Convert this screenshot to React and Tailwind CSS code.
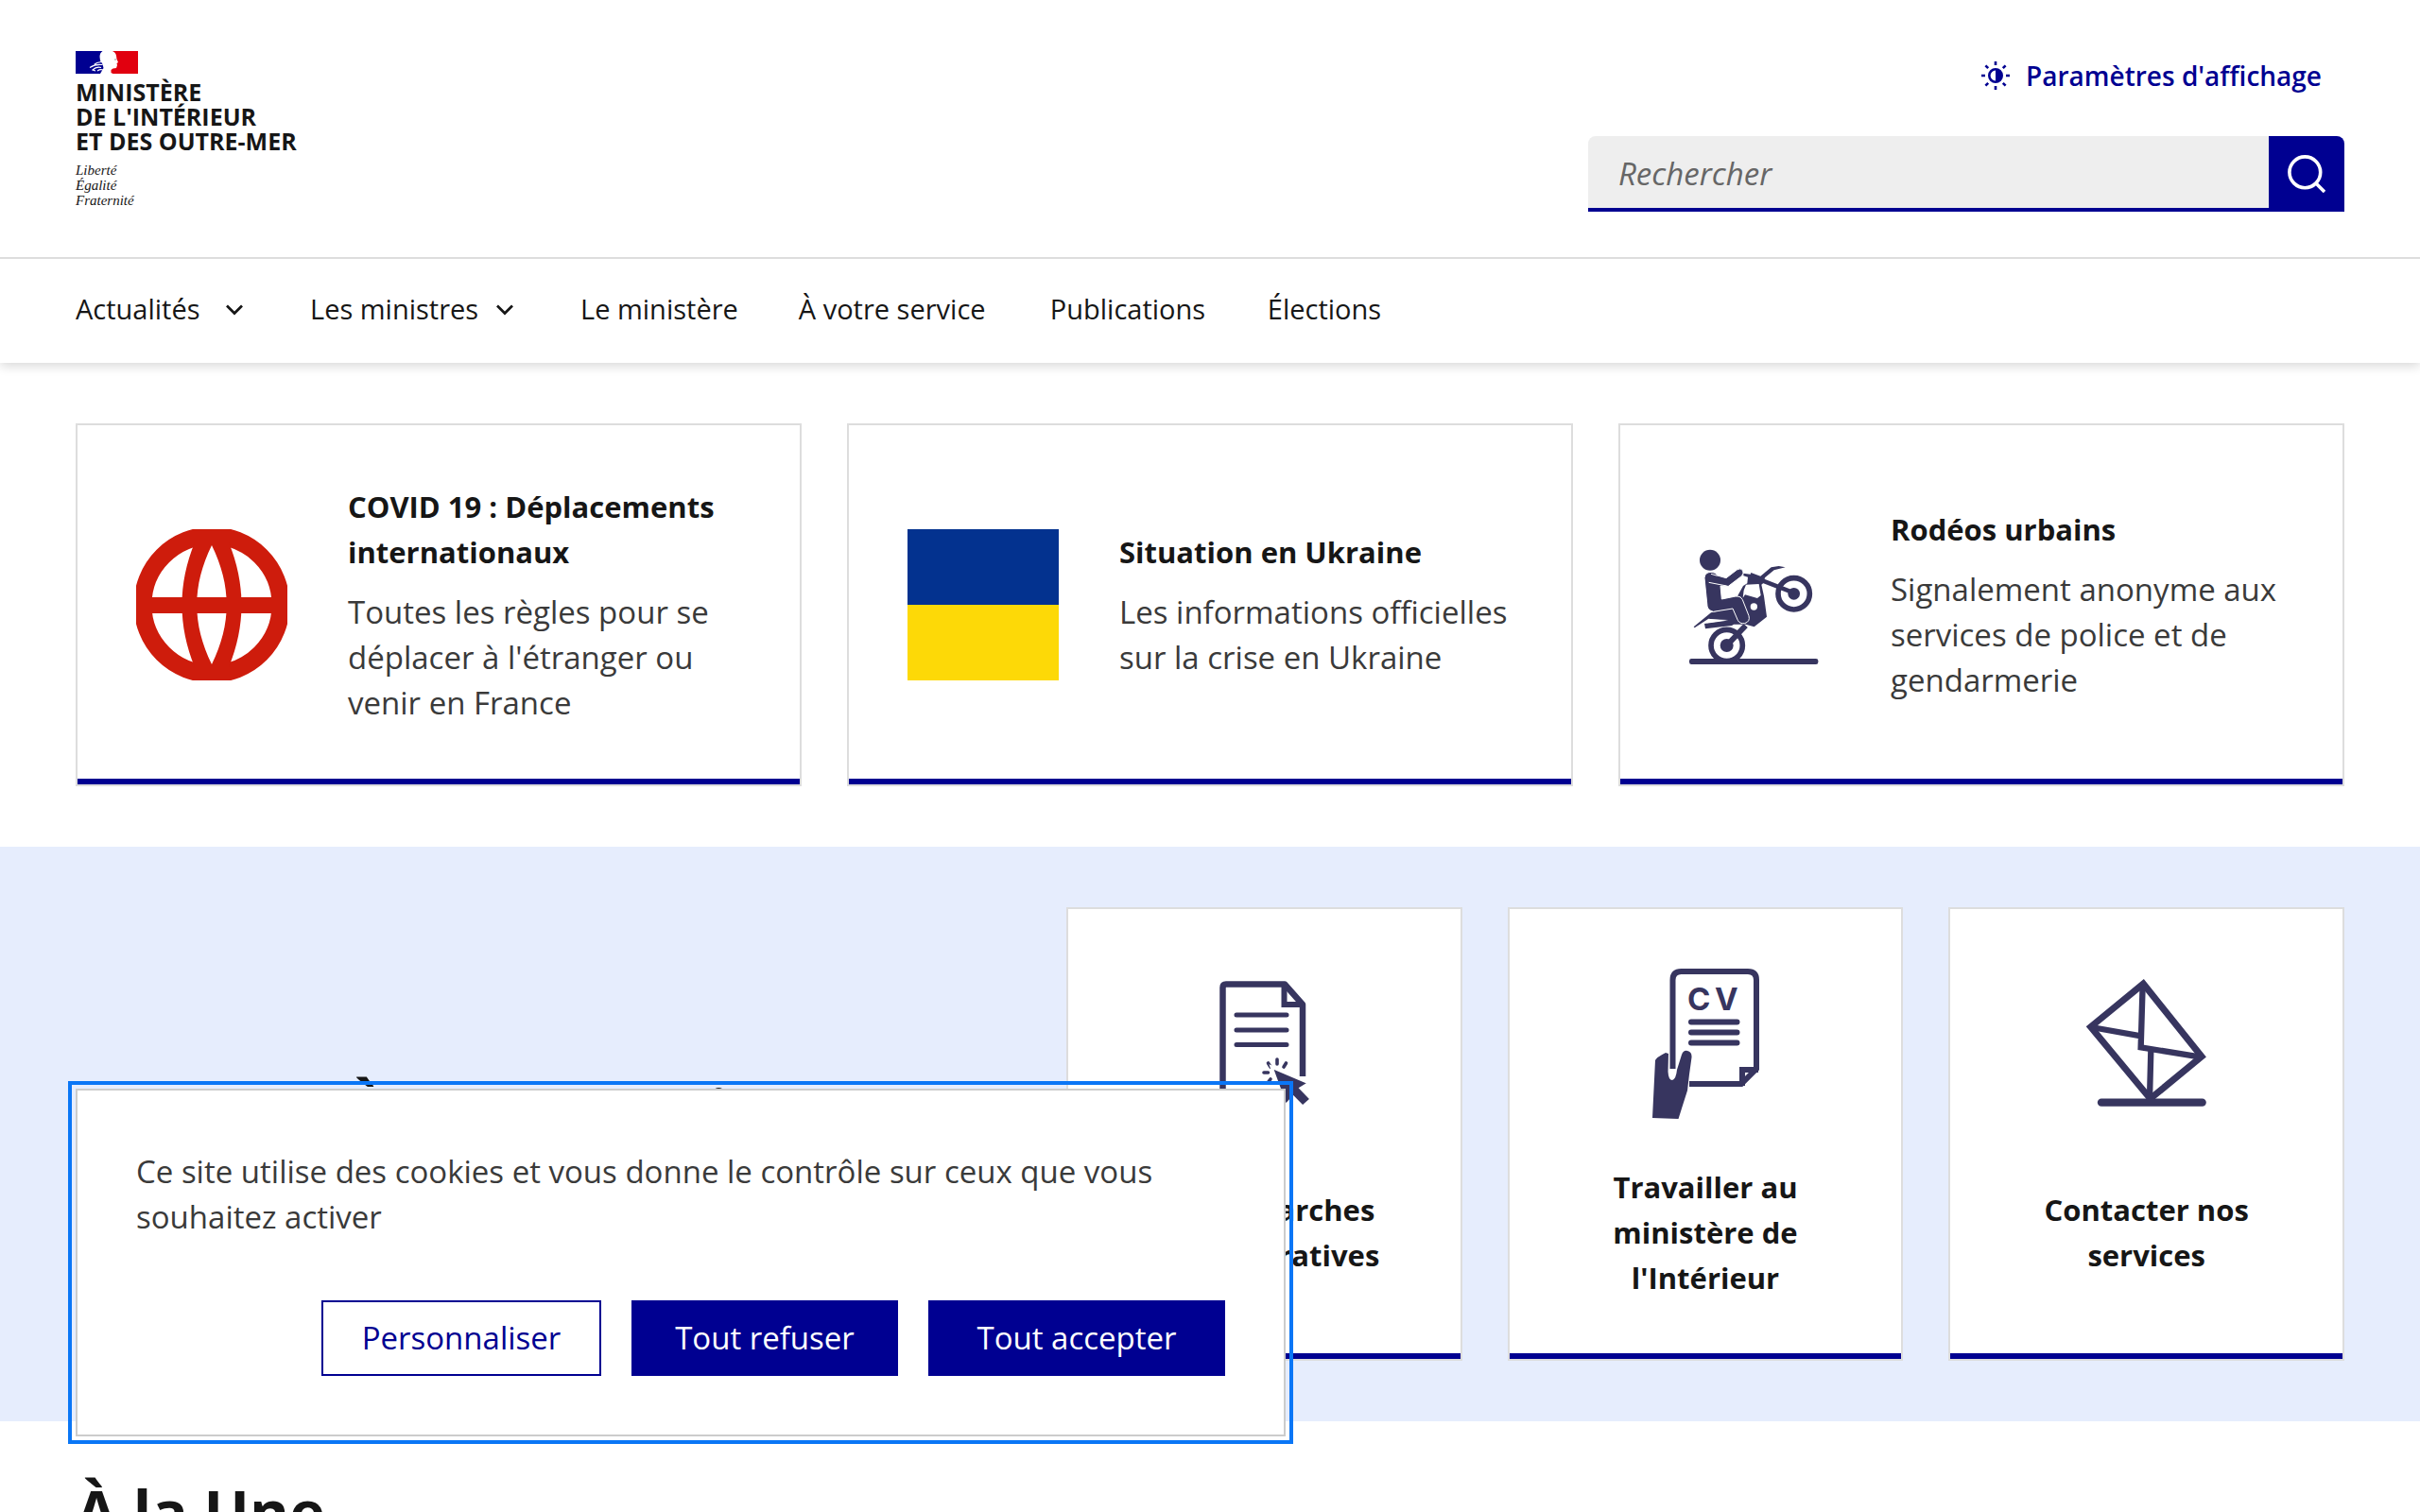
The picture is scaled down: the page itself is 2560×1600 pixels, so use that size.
import React from 'react';

const INK = '#37355f';

function FlagLogo() {
  return (
    <svg viewBox="0 0 66 24" className="h-6 w-[66px]" aria-hidden="true">
      <rect width="66" height="24" fill="#fff" />
      <path fill="#000091" d="M0 0H28.500Q25.500 2 25.500 6L26 10L28.500 14L29.500 18L26 24H0Z" />
      <path fill="#e1000f" d="M66 0H39Q42.500 1.500 43 5L43.500 8.500L45 12L43.500 13L44 15L43 18L39.500 18.500L37.500 20L37.500 23L39.500 24H66Z" />
      <path d="M27 11.500Q22 12 19.500 14.500M28.500 14.500Q21 13.500 15 17.500M27 17.500Q22 16 18 20L21 21M29 20Q26 19 23 21" fill="none" stroke="#fff" strokeWidth="1.200" />
      <path d="M41 9h2" stroke="#999" strokeWidth="1" />
    </svg>
  );
}

function SunIcon() {
  return (
    <svg viewBox="0 0 32 32" className="size-8" fill="none" stroke="currentColor" aria-hidden="true">
      <circle cx="16" cy="16" r="6.700" strokeWidth="2.600" />
      <path d="M16 9.500a6.500 6.500 0 0 1 0 13Z" fill="currentColor" stroke="none" />
      <path strokeWidth="2.600" d="M16 1v4M16 27v4M1 16h4M27 16h4M5.400 5.400l2.800 2.800M23.800 23.800l2.800 2.800M5.400 26.600l2.800-2.800M23.800 8.200l2.800-2.800" />
    </svg>
  );
}

function SearchIcon() {
  return (
    <svg viewBox="0 0 40 40" className="size-10" fill="none" stroke="currentColor" strokeWidth="3.600" aria-hidden="true">
      <circle cx="18.300" cy="18.300" r="16.400" />
      <path d="M30 30l9 9" />
    </svg>
  );
}

function Chevron() {
  return (
    <svg viewBox="0 0 32 32" className="size-8" fill="none" stroke="currentColor" strokeWidth="2.700" aria-hidden="true">
      <path d="M8 12.500l8 8 8-8" />
    </svg>
  );
}

function GlobeIcon() {
  return (
    <svg viewBox="0 0 160 160" className="size-40 shrink-0" fill="#ce1c0c" aria-hidden="true">
      <circle cx="80" cy="80" r="73" fill="none" stroke="#ce1c0c" strokeWidth="19" />
      <path
        fillRule="evenodd"
        d="M62 14C44 58 44 102 62 146H98C116 102 116 58 98 14ZM80 17C59 60 59 100 80 143C101 100 101 60 80 17Z"
      />
      <rect x="8" y="72" width="144" height="17" />
    </svg>
  );
}

function UkraineFlag() {
  return (
    <svg viewBox="0 0 160 160" className="size-40 shrink-0" aria-hidden="true">
      <rect width="160" height="80" fill="#03328f" />
      <rect y="80" width="160" height="80" fill="#fdd907" />
    </svg>
  );
}

function MotoIcon() {
  return (
    <svg viewBox="228 60 480 480" className="size-40 shrink-0" fill={INK} aria-hidden="true">
      <circle cx="327" cy="158" r="33" />
      <rect x="261" y="471" width="409" height="18" rx="7" />
      <g fill="none" stroke={INK} strokeWidth="17">
        <circle cx="593" cy="265" r="50" />
        <circle cx="380" cy="429" r="50" />
      </g>
      <circle cx="593" cy="265" r="19" />
      <circle cx="380" cy="429" r="21" />
      <path d="M380 429L440 366" stroke={INK} strokeWidth="18" />
      <path d="M495 224L593 262" stroke={INK} strokeWidth="14" />
      <path d="M433 200L455 203L457 198L487 209L521 181L545 177L566 181L530 190L501 214L497 230L490 236L498 272L507 338L467 370L440 362L402 362L396 366L312 376L309 360L380 350L322 344L278 373L275 370L330 325L400 310L425 275L414 272L432 240L445 232L447 212L433 208Z" />
      <path fill="#fff" d="M441 236L482 234L488 270L477 279L438 268L431 278L434 254ZM322 346L385 348L318 358Z" />
      <circle cx="466" cy="306" r="11" fill="#fff" />
      <path d="M309 215Q310 197 330 196Q345 196 350 207L378 215L412 189Q424 181 431 191Q435 201 427 209L385 241L360 240L364 282L408 273Q424 272 430 284L450 335Q455 353 437 359Q421 361 415 349L399 312L337 322Q320 317 318 304Z" stroke="#fff" strokeWidth="3" />
      <path d="M323 229L380 240M330 202L350 208" stroke="#fff" strokeWidth="3" />
    </svg>
  );
}

function DocumentIcon() {
  return (
    <svg viewBox="0 0 160 160" className="size-40 shrink-0" fill="none" stroke={INK} aria-hidden="true">
      <path strokeWidth="6.500" strokeLinejoin="round" d="M121 115V39L102 17.500H40Q36.500 17.500 36.500 21V136H92" />
      <path strokeWidth="6" d="M101.500 16V39H121" />
      <path strokeWidth="5" strokeLinecap="round" d="M51 50H104M51 66H104M51 81.500H104" />
      <path strokeWidth="3.600" strokeLinecap="round" d="M94 97V102M84.500 101L87 105M103.500 101L101 105M80 111H84.500M87 118L85 120.500" />
      <path fill={INK} stroke="#fff" strokeWidth="3" d="M88 105L128 122L119 127.500L130 139L121 147L111 137L103 146Z" />
    </svg>
  );
}

function CvIcon() {
  return (
    <svg viewBox="0 0 160 160" className="size-40 shrink-0" fill="none" stroke={INK} aria-hidden="true">
      <path strokeWidth="6" d="M45.500 107V13Q45.500 4 54.500 4H125Q134 4 134 13V107L118 123H63" />
      <path strokeWidth="6" d="M119 125V108H136" />
      <path strokeWidth="6" strokeLinecap="round" d="M65 57.500H113.500M65 68.500H113.500M65 79.500H113.500" />
      <path fill={INK} stroke="none" d="M27 98Q28 95 38 90L41 91L40.500 110Q41 119 45 119Q49 118 50 108L55 92Q57 87 61 88Q66 89 65.500 95L63 113L61 130L51.500 160L24 159Z" />
      <g fill={INK} stroke="none" fontSize="33" fontWeight="700" fontFamily="Inter, sans-serif">
        <text x="61" y="45">C</text>
        <text x="90" y="45">V</text>
      </g>
    </svg>
  );
}

function MailIcon() {
  return (
    <svg viewBox="423 222 480 480" className="size-40 shrink-0" fill="none" stroke={INK} aria-hidden="true">
      <path strokeWidth="21" d="M652 273L485 410L674 638L837 504Z" />
      <path strokeWidth="19" d="M650 275L644 475L835 506M487 411L645 439M676 485L672 640" />
      <path strokeWidth="25" strokeLinecap="round" d="M519 650H839" />
    </svg>
  );
}

const nav = [
  { label: 'Actualités', menu: true, width: 'min-w-[184px]' },
  { label: 'Les ministres', menu: true, width: 'min-w-[222px]' },
  { label: 'Le ministère', width: 'min-w-[166px]' },
  { label: 'À votre service', width: 'min-w-[202px]' },
  { label: 'Publications', width: 'min-w-[166px]' },
  { label: 'Élections', width: '' },
];

const news = [
  { icon: GlobeIcon, title: 'COVID 19 : Déplacements internationaux', text: "Toutes les règles pour se déplacer à l'étranger ou venir en France" },
  { icon: UkraineFlag, title: 'Situation en Ukraine', text: 'Les informations officielles sur la crise en Ukraine' },
  { icon: MotoIcon, title: 'Rodéos urbains', text: 'Signalement anonyme aux services de police et de gendarmerie' },
];

const services = [
  { icon: DocumentIcon, title: 'Vos démarches administratives' },
  { icon: CvIcon, title: "Travailler au ministère de l'Intérieur" },
  { icon: MailIcon, title: 'Contacter nos services' },
];

function Card({ className, children }) {
  return (
    <a href="#" className="flex flex-col border-2 border-[#ddd] bg-white">
      <div className={className}>{children}</div>
      <div className="h-1.5 bg-[#000091]" />
    </a>
  );
}

function Header() {
  return (
    <header className="shadow-[0_4px_10px_rgba(0,0,0,0.14)]">
      <div className="flex items-start justify-between px-20 pb-12">
        <a href="#" className="flex flex-col pt-[54px]">
          <FlagLogo />
          <span className="mt-1.5 text-[25px] leading-[26px] font-bold">
            MINISTÈRE<br />DE L'INTÉRIEUR<br />ET DES OUTRE-MER
          </span>
          <span className="mt-2.5 font-['Liberation_Serif',serif] text-[15px] leading-4 italic">
            Liberté<br />Égalité<br />Fraternité
          </span>
        </a>
        <div className="flex w-[800px] flex-col pt-12">
          <button className="mr-6 flex h-16 items-center gap-4 self-end text-[28px] font-semibold text-[#000091]">
            <SunIcon />
            Paramètres d'affichage
          </button>
          <form className="mt-8 flex h-20" role="search" onSubmit={(e) => e.preventDefault()}>
            <input
              type="search"
              aria-label="Rechercher"
              placeholder="Rechercher"
              className="min-w-0 flex-1 rounded-tl-lg border-b-4 border-[#000091] bg-[#eee] px-8 pt-1 text-[33px] outline-none placeholder:text-[#666] placeholder:italic"
            />
            <button type="submit" aria-label="Lancer la recherche" className="flex w-20 items-center justify-center rounded-tr-lg bg-[#000091] text-white">
              <SearchIcon />
            </button>
          </form>
        </div>
      </div>
      <nav className="flex h-28 items-center gap-16 border-t-2 border-[#ddd] px-20 pb-1 text-[29px]" aria-label="Menu principal">
        {nav.map(({ label, menu, width }) =>
          menu ? (
            <button key={label} className={`flex items-center justify-between ${width}`}>
              {label}
              <Chevron />
            </button>
          ) : (
            <a key={label} href="#" className={width}>{label}</a>
          )
        )}
      </nav>
    </header>
  );
}

function CookieBanner() {
  return (
    <section
      aria-label="Gestion des cookies"
      className="fixed bottom-20 left-20 max-w-[1280px] border-2 border-[#ccc] bg-white p-[62px] outline-4 outline-offset-4 outline-[#0a76f6]"
    >
      <p className="text-[33px] leading-[48px] text-[#3a3a3a]">
        Ce site utilise des cookies et vous donne le contrôle sur ceux que vous souhaitez activer
      </p>
      <div className="mt-16 flex justify-end gap-8 text-[33px] leading-[48px]">
        <button className="h-20 w-[296px] border-2 border-[#000091] text-[#000091]">Personnaliser</button>
        <button className="h-20 w-[282px] bg-[#000091] text-white">Tout refuser</button>
        <button className="h-20 w-[314px] bg-[#000091] text-white">Tout accepter</button>
      </div>
    </section>
  );
}

export default function App() {
  return (
    <div className="h-screen overflow-hidden bg-white font-['Open_Sans',sans-serif] text-[#161616]">
      <Header />
      <main>
        <section className="grid grid-cols-3 gap-12 px-20 py-16">
          {news.map(({ icon: Icon, title, text }) => (
            <Card key={title} className="flex flex-1 items-center gap-16 px-[62px] pt-[62px] pb-14">
              <Icon />
              <div className="flex min-h-64 flex-col justify-center gap-4 leading-[48px]">
                <h3 className="text-[31px] font-bold">{title}</h3>
                <p className="text-[33px] text-[#3a3a3a]">{text}</p>
              </div>
            </Card>
          ))}
        </section>
        <section className="flex items-center bg-[#e6edfd] px-20 py-16">
          <h2 className="min-w-0 flex-[1048] pb-12 text-center text-[64px] leading-[80px] font-bold">À votre service</h2>
          <div className="grid min-w-0 flex-[1352] grid-cols-3 gap-12">
            {services.map(({ icon: Icon, title }) => (
              <Card key={title} className="flex flex-1 flex-col items-center gap-12 px-[62px] pt-[62px] pb-14">
                <Icon />
                <h3 className="flex min-h-36 items-center text-center text-[31px] leading-[48px] font-bold">{title}</h3>
              </Card>
            ))}
          </div>
        </section>
        <h2 className="px-20 pt-14 text-[64px] leading-[80px] font-bold">À la Une</h2>
      </main>
      <CookieBanner />
    </div>
  );
}
